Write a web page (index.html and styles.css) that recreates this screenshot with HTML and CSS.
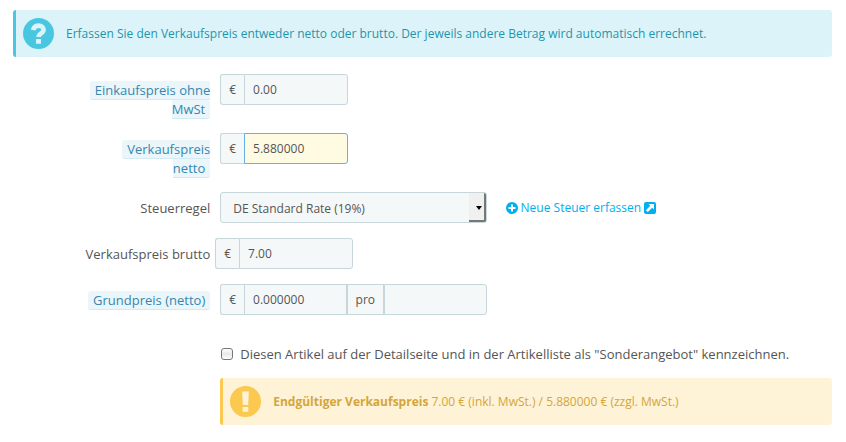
FILE: index.html
```html
<!DOCTYPE html>
<html lang="de">
<head>
<meta charset="utf-8">
<title>Preise</title>
<link rel="stylesheet" href="styles.css">
</head>
<body>
<form class="panel">
  <div class="alert alert-info">
    <svg class="alert-icon" viewBox="0 0 31 31" aria-hidden="true">
      <circle cx="15.5" cy="15.5" r="15.5" fill="#4ac7e0"/>
      <path d="M10.2 12.2C10.8 8.8 12.6 7.6 15.3 7.6C18.5 7.6 20.6 9.2 20.6 11.8C20.6 15.4 15.6 15.2 15.6 18.9" fill="none" stroke="#dcf4f9" stroke-width="4.6"/>
      <rect x="13" y="20.9" width="5" height="4.8" rx=".5" fill="#dcf4f9"/>
    </svg>
    <p>Erfassen Sie den Verkaufspreis entweder netto oder brutto. Der jeweils andere Betrag wird automatisch errechnet.</p>
  </div>

  <div class="row">
    <label class="label" for="wholesale"><span class="hint">Einkaufspreis ohne MwSt</span></label>
    <div class="col col-2">
      <div class="group"><span class="addon">€</span><input class="field" id="wholesale" type="text" value="0.00"></div>
    </div>
  </div>

  <div class="row">
    <label class="label" for="net"><span class="hint">Verkaufspreis netto</span></label>
    <div class="col col-2">
      <div class="group"><span class="addon">€</span><input class="field field-active" id="net" type="text" value="5.880000"></div>
    </div>
  </div>

  <div class="row">
    <label class="label" for="tax">Steuerregel</label>
    <div class="col col-4">
      <div class="select">
        <select id="tax"><option>DE Standard Rate (19%)</option></select>
      </div>
    </div>
    <div class="col">
      <a class="link" href="#">
        <svg viewBox="0 0 12 12" aria-hidden="true"><circle cx="6" cy="6" r="6" fill="#00aff0"/><path d="M6 2.5v7M2.5 6h7" stroke="#fff" stroke-width="2"/></svg>
        <span>Neue Steuer erfassen</span>
        <svg viewBox="0 0 12 12" aria-hidden="true"><rect width="12" height="12" rx="2" fill="#00aff0"/><path d="M4.5 2H10v5.5L8.2 5.7 3.8 10.1 1.9 8.2 6.3 3.8z" fill="#fff"/></svg>
      </a>
    </div>
  </div>

  <div class="row">
    <label class="label" for="gross">Verkaufspreis brutto</label>
    <div class="col col-2 col-flush">
      <div class="group"><span class="addon">€</span><input class="field" id="gross" type="text" value="7.00"></div>
    </div>
  </div>

  <div class="row">
    <label class="label" for="unit-price"><span class="hint">Grundpreis (netto)</span></label>
    <div class="col col-4">
      <div class="group">
        <span class="addon">€</span><input class="field" id="unit-price" type="text" value="0.000000">
        <label class="addon addon-middle" for="unity">pro</label><input class="field" id="unity" type="text">
      </div>
    </div>
  </div>

  <div class="row">
    <div class="col col-offset">
      <label class="check"><input type="checkbox">Diesen Artikel auf der Detailseite und in der Artikelliste als "Sonderangebot" kennzeichnen.</label>
    </div>
  </div>

  <div class="row">
    <div class="col col-offset">
      <div class="alert alert-warning">
        <svg class="alert-icon" viewBox="0 0 31 31" aria-hidden="true">
          <circle cx="15.5" cy="15.5" r="15.5" fill="#fbc94f"/>
          <path d="M12.2 5.5h6.600l-.6 13.500h-5.400z" fill="#fff3d7"/>
          <rect x="12.7" y="20.9" width="5.6" height="4.8" rx=".5" fill="#fff3d7"/>
        </svg>
        <p><strong>Endgültiger Verkaufspreis</strong> 7.00 € (inkl. MwSt.) / 5.880000 € (zzgl. MwSt.)</p>
      </div>
    </div>
  </div>
</form>
</body>
</html>
```
FILE: styles.css
```css
* {
  box-sizing: border-box;
}

body {
  margin: 0;
  background: #fff;
  color: #555;
  font: 12px/17px "Open Sans", "Noto Sans", sans-serif;
}

.panel {
  padding: 10px 14px 0 13px;
}

.alert {
  display: flex;
  align-items: center;
  gap: 12px;
  padding: 8px 7px;
  border-left: 3px solid;
  border-radius: 3px;
}

.alert p {
  margin: 0;
}

.alert-icon {
  flex: none;
  width: 31px;
  height: 31px;
}

.alert-info {
  margin-bottom: 17px;
  border-color: #4ac7e0;
  background: #dcf4f9;
  color: #1e94ab;
}

.alert-warning {
  border-color: #fbc94f;
  background: #fff3d7;
  color: #d2a63c;
}

.row {
  display: flex;
  align-items: flex-start;
  margin: 0 -5px 15px;
}

.label {
  flex: none;
  width: 16.6667%;
  margin: 0 0 -1px 8.3333%;
  padding: 7px 5px 0;
  font-size: 13px;
  line-height: 19px;
  text-align: right;
}

.hint {
  padding: 0 5px;
  border-bottom: 1px solid #d3eaf5;
  border-radius: 3px;
  background: #ebf6fb;
  color: #3586ae;
}

.col {
  padding: 0 5px;
}

.col-2 {
  width: 16.6667%;
}

.col-4 {
  width: 33.3333%;
}

.col-offset {
  flex: 1;
  margin-left: 25%;
}

.col-flush {
  padding: 0;
}

.group {
  display: flex;
  height: 31px;
}

.addon {
  flex: none;
  padding: 6px 8px;
  border: 1px solid #c7d6db;
  border-right: 0;
  border-radius: 3px 0 0 3px;
  background: #f5f8f9;
}

.addon-middle {
  border-right: 1px solid #c7d6db;
  border-radius: 0;
}

.field {
  flex: 1;
  width: 0;
  min-width: 0;
  padding: 6px 8px;
  border: 1px solid #c7d6db;
  border-radius: 0 3px 3px 0;
  outline: 0;
  background: #f5f8f9;
  color: #555;
  font: inherit;
}

.field:not(:last-child) {
  border-radius: 0;
}

.field-active {
  border-color: #66afe9;
  background: #fffbe3;
}

.select {
  position: relative;
}

.select select {
  display: block;
  width: 100%;
  height: 31px;
  padding: 2px 12px 0;
  border: 1px solid #c7d6db;
  border-radius: 3px;
  background: #f5f8f9;
  color: #555;
  font: inherit;
  appearance: none;
}

.select::before {
  content: "";
  position: absolute;
  top: 1px;
  right: 1px;
  bottom: 1px;
  width: 15px;
  border: solid #777;
  border-width: 0 2px 2px 0;
  border-radius: 0 2px 2px 0;
  background: #f0f0f0;
  pointer-events: none;
}

.select::after {
  content: "";
  position: absolute;
  top: 14px;
  right: 5px;
  border: 3px solid transparent;
  border-top: 4px solid #000;
  border-bottom: 0;
  pointer-events: none;
}

.link {
  display: flex;
  align-items: center;
  gap: 3px;
  padding: 7px 9px;
  color: #00aff0;
  text-decoration: none;
}

.link svg {
  width: 12px;
  height: 12px;
}

.check {
  display: flex;
  align-items: center;
  gap: 7px;
  padding: 15px 0 0 1px;
  font-size: 13px;
  line-height: 18px;
}

.check input {
  width: 12px;
  height: 12px;
  margin: 0;
  border: 1px solid #777;
  border-radius: 3px;
  background: linear-gradient(#fff, #e8e8e8 50%, #fff);
  appearance: none;
}
```
